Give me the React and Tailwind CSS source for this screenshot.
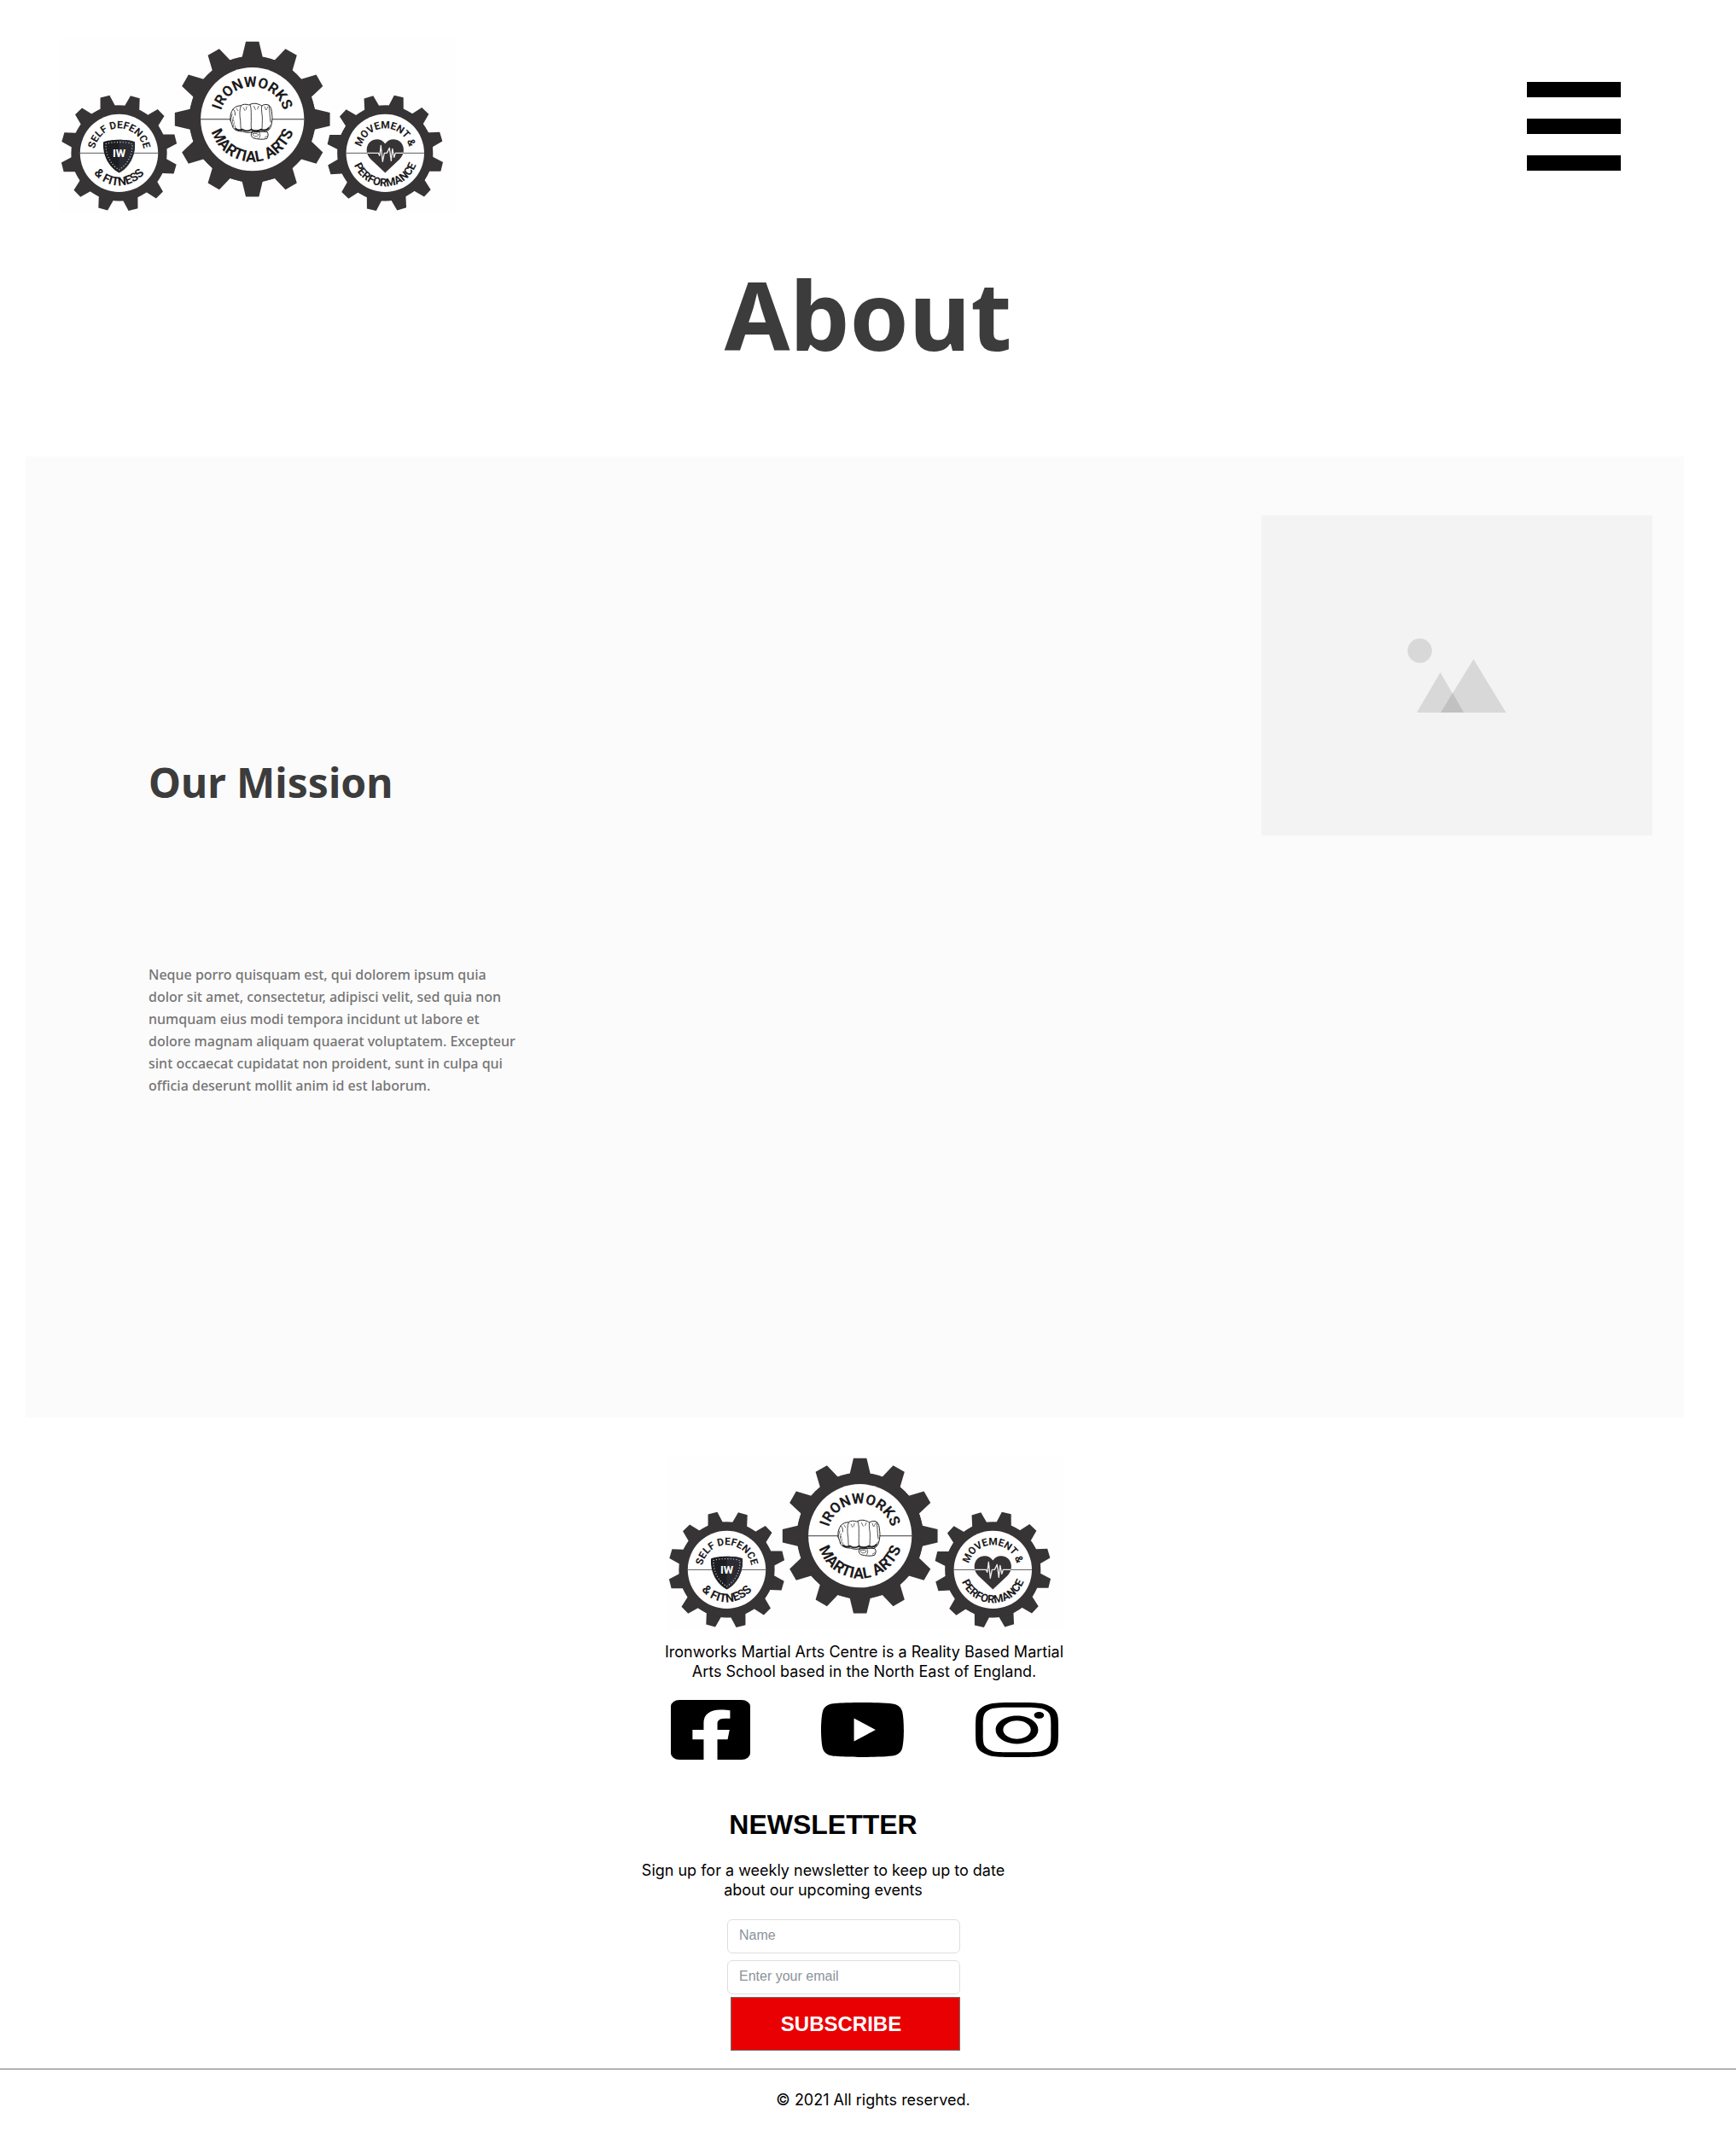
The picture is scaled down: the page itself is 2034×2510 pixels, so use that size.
import React, { useId } from "react";

const INK = "#373435";

function gearPath(outer, body, tip, base, offset) {
  const points = [];
  for (let i = 0; i < 12; i++) {
    const a = ((offset + i * 30) * Math.PI) / 180;
    const at = (x, r) => {
      const y = -Math.sqrt(r * r - x * x);
      return [x * Math.cos(a) - y * Math.sin(a), x * Math.sin(a) + y * Math.cos(a)];
    };
    points.push(at(-base, body), at(-tip, outer), at(tip, outer), at(base, body));
  }
  return "M" + points.map(([x, y]) => x.toFixed(2) + " " + y.toFixed(2)).join("L") + "Z";
}

function Gear({ x, y, outer, body, hole, tip, base, offset, top, bottom, line, children }) {
  const id = useId();
  const topArc = `M${-top.r} 0A${top.r} ${top.r} 0 0 1 ${top.r} 0`;
  const bottomArc = `M${-bottom.r} 0A${bottom.r} ${bottom.r} 0 0 0 ${bottom.r} 0`;
  return (
    <g transform={`translate(${x} ${y})`}>
      <path d={gearPath(outer, body, tip, base, offset)} fill={INK} />
      <circle r={body} fill={INK} />
      <circle r={hole} fill="#fff" />
      <path d={`M${-hole} 0H${hole}`} stroke={INK} strokeWidth={line} />
      <path id={id + "t"} d={topArc} fill="none" />
      <path id={id + "b"} d={bottomArc} fill="none" />
      <g fill="#1c1a1b" fontFamily="Roboto, sans-serif" fontWeight="700" textAnchor="middle">
        <text fontSize={top.size}>
          <textPath href={"#" + id + "t"} startOffset="50%">{top.text}</textPath>
        </text>
        <text fontSize={bottom.size}>
          <textPath href={"#" + id + "b"} startOffset="50%">{bottom.text}</textPath>
        </text>
      </g>
      {children}
    </g>
  );
}

function Fist() {
  return (
    <g transform="scale(.3333)" fill="none" stroke="#222" strokeWidth="3" strokeLinecap="round" strokeLinejoin="round">
      <path
        fill="#fff"
        d="M-77 4C-79-12-76-24-67-37C-58-46-50-47-40-48C-34-53-22-54-12-50C-3-55 7-57 17-54C24-52 29-50 33-47C40-52 50-54 58-49C66-43 68-32 69-16C71-3 69 10 66 22C63 33 57 41 47 44L-2 45C-14 49-26 46-34 43C-50 43-66 38-70 25C-71 17-75 12-77 4Z"
      />
      <path d="M-67-35C-62-30-60-24-61-14M-40-47C-46-36-45-12-42 6C-41 22-42 33-38 42M-8-51C-2-38-5-12-4 6C-5 22-5 34-1 42M33-47C29-32 37-14 35 6C34 22 36 33 31 42M58-49C62-34 60-12 64 10" strokeWidth="2.5" />
      <path d="M-71-18L-76 0M-67-8L-71 14M-64 12L-67 26M-61 24L-60 33M-32-41L-26-30M-20-44L-22-34M5-46L11-34M22-46L18-36M43-44L47-33M54-43L50-34M-56-38L-51-30M-68 2L-65 7M62 22L57 32" strokeWidth="2" />
      <path d="M-58 34C-50 41-42 39-35 36C-25 43-12 42-4 36C4 42 21 43 30 36C40 40 51 40 57 31" strokeWidth="6" />
      <path fill="#fff" d="M-3 47C4 43 12 47 21 45C34 43 45 44 52 45C57 51 56 59 51 68C36 73 17 70 3 66C-4 63-6 52-3 47Z" />
      <path d="M2 51C9 48 18 51 22 54C21 59 17 61 8 60C3 58 1 55 2 51M25 47C29 54 27 62 23 67M44 64L51 60" strokeWidth="2" />
    </g>
  );
}

function Shield() {
  return (
    <g>
      <path d="M-18.5-13C-10-16.5 10-16.5 18.5-13C19.5 4 11 17 0 23C-11 17-19.5 4-18.5-13Z" fill="#1d1e22" />
      <path d="M0-15.6C8-15.6 14-15 18.5-13C19.5 4 11 17 0 23Z" fill="#2b2c33" />
      <path d="M-15.5-10.8C-8-13.5 8-13.5 15.5-10.8C16 3 9 14 0 19.5C-9 14-16 3-15.5-10.8Z" fill="none" stroke="#d8d8d8" strokeWidth="1.1" strokeDasharray="1.1 2.2" />
      <text y="5" textAnchor="middle" fill="#fff" fontFamily="Roboto, sans-serif" fontWeight="700" fontSize="13">IW</text>
    </g>
  );
}

function Heart() {
  return (
    <g>
      <path d="M0 23L-17 7C-23 1-23-8-18-13C-12-18-4-17 0-11C4-17 12-18 18-13C23-8 23 1 17 7Z" fill={INK} />
      <path d="M-21 0H-8L-6.5 3L-5-9L-3 10L-1 0H2L5-6L7 9L8.5-5L10.500 5L12 0H21" fill="none" stroke="#eee" strokeWidth="1.300" strokeLinejoin="round" />
    </g>
  );
}

function Logo() {
  return (
    <svg width="464" height="205" viewBox="69 45 464 205" role="img" aria-label="Ironworks Martial Arts" className="block">
      <rect x="69" y="45" width="464" height="205" fill="#fefefe" />
      <Gear x={139.5} y={179.4} outer={68.5} body={56} hole={45.7} tip={5.6} base={8.8} offset={16} line={0.8}
        top={{ text: "SELF DEFENCE", r: 29, size: 12 }} bottom={{ text: "& FITNESS", r: 38, size: 14 }}>
        <Shield />
      </Gear>
      <Gear x={295.7} y={139.7} outer={91.2} body={74} hole={60.6} tip={7.7} base={12} offset={0} line={1.1}
        top={{ text: "IRONWORKS", r: 38, size: 17 }} bottom={{ text: "MARTIAL ARTS", r: 50, size: 18 }}>
        <Fist />
      </Gear>
      <Gear x={451.3} y={179.4} outer={68.5} body={56} hole={45.7} tip={5.6} base={8.8} offset={13.5} line={0.8}
        top={{ text: "MOVEMENT &", r: 29, size: 12 }} bottom={{ text: "PERFORMANCE", r: 39, size: 13 }}>
        <Heart />
      </Gear>
    </svg>
  );
}

function SocialLink({ label, viewBox, className, children }) {
  return (
    <a href="#" aria-label={label}>
      <svg viewBox={viewBox} preserveAspectRatio="none" className={className} fill="currentColor">
        {children}
      </svg>
    </a>
  );
}

export default function App() {
  return (
    <div className="min-h-screen bg-white font-['Inter',sans-serif] text-black">
      <header className="flex items-start justify-between pt-[45px] pr-[135px] pl-[69px]">
        <a href="#" aria-label="Home">
          <Logo />
        </a>
        <button type="button" aria-label="Open menu" className="mt-[51px] flex w-[110px] flex-col gap-[25px]">
          <span className="h-[18px] w-full bg-black" />
          <span className="h-[18px] w-full bg-black" />
          <span className="h-[18px] w-full bg-black" />
        </button>
      </header>

      <main className="font-['Noto_Sans',sans-serif]">
        <h1 className="mt-[38px] text-center text-[111px] leading-[160px] font-bold text-[#3c3c3c]">About</h1>

        <section className="mt-[87px] mr-[61px] ml-[30px] flex min-h-[1126px] items-start justify-between bg-[#fbfbfb] pr-[37px] pl-[144px]">
          <div className="w-[440px] pt-[350px]">
            <h2 className="text-5xl leading-[64px] font-bold text-[#3c3c3c]">Our Mission</h2>
            <p className="mt-[180px] text-base leading-[26px] font-medium text-[#757575]">
              Neque porro quisquam est, qui dolorem ipsum quia dolor sit amet, consectetur, adipisci velit, sed quia non numquam
              eius modi tempora incidunt ut labore et dolore magnam aliquam quaerat voluptatem. Excepteur sint occaecat
              cupidatat non proident, sunt in culpa qui officia deserunt mollit anim id est laborum.
            </p>
          </div>
          <div className="mt-[69px] flex h-[375px] w-[458px] items-center justify-center bg-[#f3f3f3]">
            <svg width="116" height="88" viewBox="0 0 116 88" role="img" aria-label="Image placeholder">
              <circle cx="14.500" cy="14.500" r="14.300" fill="#d8d8d8" />
              <path d="M11 87L38.500 40L66 87Z" fill="#d8d8d8" />
              <path d="M39 87L77.500 24.500L115.500 87Z" fill="#d8d8d8" />
              <path d="M39 87L53 64L66 87Z" fill="#c1c1c1" />
            </svg>
          </div>
        </section>
      </main>

      <footer className="flex flex-col items-center pt-[44px]">
        <div className="mr-[9px] flex flex-col items-center">
          <Logo />
          <p className="mt-[14px] w-[490px] text-center text-lg leading-[23px]">
            Ironworks Martial Arts Centre is a Reality Based Martial Arts School based in the North East of England.
          </p>
          <div className="mt-[22px] flex w-[454px] items-center justify-between">
            <SocialLink label="Facebook" viewBox="0 32 448 448" className="h-[70px] w-[93px]">
              <path d="M400 32H48A48 48 0 0 0 0 80v352a48 48 0 0 0 48 48h137.250V327.690h-63V256h63v-54.640c0-62.150 37-96.480 93.670-96.480 27.140 0 55.520 4.840 55.520 4.840v61h-31.270c-30.810 0-40.420 19.120-40.420 38.730V256h68.780l-11 71.690h-57.780V480H400a48 48 0 0 0 48-48V80a48 48 0 0 0-48-48z" />
            </SocialLink>
            <SocialLink label="YouTube" viewBox="14.900 64 546.200 384" className="h-16 w-[97px]">
              <path d="M549.655 124.083c-6.281-23.650-24.787-42.276-48.284-48.597C458.781 64 288 64 288 64S117.220 64 74.629 75.486c-23.497 6.322-42.003 24.947-48.284 48.597-11.412 42.867-11.412 132.305-11.412 132.305s0 89.438 11.412 132.305c6.281 23.650 24.787 41.500 48.284 47.821C117.220 448 288 448 288 448s170.780 0 213.371-11.486c23.497-6.321 42.003-24.171 48.284-47.821 11.412-42.867 11.412-132.305 11.412-132.305s0-89.438-11.412-132.305zm-317.510 213.508V175.185l142.739 81.205-142.739 81.201z" />
            </SocialLink>
            <SocialLink label="Instagram" viewBox="0 32 448 448" className="h-16 w-[97px]">
              <path d="M224.100 141c-63.600 0-114.900 51.300-114.900 114.900s51.300 114.900 114.900 114.900S339 319.500 339 255.900 287.700 141 224.100 141zm0 189.600c-41.100 0-74.700-33.500-74.700-74.700s33.500-74.700 74.700-74.700 74.700 33.500 74.700 74.700-33.600 74.700-74.700 74.700zm146.400-194.300c0 14.900-12 26.800-26.800 26.800-14.900 0-26.800-12-26.800-26.800s12-26.800 26.800-26.800 26.800 12 26.800 26.800zm76.100 27.200c-1.700-35.900-9.900-67.700-36.200-93.900-26.200-26.200-58-34.400-93.900-36.200-37-2.100-147.900-2.100-184.900 0-35.800 1.700-67.600 9.900-93.900 36.100s-34.400 58-36.200 93.900c-2.100 37-2.100 147.900 0 184.900 1.700 35.900 9.900 67.700 36.200 93.900s58 34.400 93.900 36.200c37 2.100 147.900 2.100 184.900 0 35.900-1.700 67.700-9.900 93.900-36.200 26.200-26.200 34.400-58 36.200-93.900 2.100-37 2.100-147.800 0-184.800zM398.800 388c-7.800 19.600-22.900 34.700-42.600 42.600-29.500 11.700-99.500 9-132.100 9s-102.700 2.600-132.100-9c-19.600-7.800-34.700-22.900-42.600-42.600-11.700-29.500-9-99.500-9-132.100s-2.600-102.700 9-132.100c7.800-19.600 22.900-34.700 42.600-42.600 29.500-11.700 99.500-9 132.100-9s102.700-2.600 132.100 9c19.600 7.800 34.700 22.900 42.600 42.600 11.700 29.500 9 99.500 9 132.100s2.700 102.700-9 132.100z" />
            </SocialLink>
          </div>
        </div>

        <section className="mt-[56px] mr-[105px] flex flex-col items-center">
          <h2 className="font-['Liberation_Sans',sans-serif] text-[32px] leading-10 font-bold">NEWSLETTER</h2>
          <p className="mt-[22px] w-[450px] text-center text-lg leading-[23px]">
            Sign up for a weekly newsletter to keep up to date about our upcoming events
          </p>
          <form className="mt-[23px] ml-[48px] flex w-[273px] flex-col items-end font-['Liberation_Sans',sans-serif]" onSubmit={(e) => e.preventDefault()}>
            <input type="text" aria-label="Name" placeholder="Name" className="h-10 w-full rounded-md border border-[#dedede] px-[13px] pb-[3px] text-base placeholder:text-[#8b929b]" />
            <input type="email" aria-label="Email" placeholder="Enter your email" className="mt-2 h-10 w-full rounded-md border border-[#dedede] px-[13px] pb-[3px] text-base placeholder:text-[#8b929b]" />
            <button type="submit" className="mt-[3px] h-[63px] w-[269px] border border-[#707070] bg-[#e90003] pr-[10px] text-2xl font-bold text-white">
              SUBSCRIBE
            </button>
          </form>
        </section>

        <div className="mt-[21px] w-full border-t border-[#707070] pt-[24px] pb-[30px] pl-[12px] text-center text-lg leading-6">
          <p>© 2021 All rights reserved.</p>
        </div>
      </footer>
    </div>
  );
}
